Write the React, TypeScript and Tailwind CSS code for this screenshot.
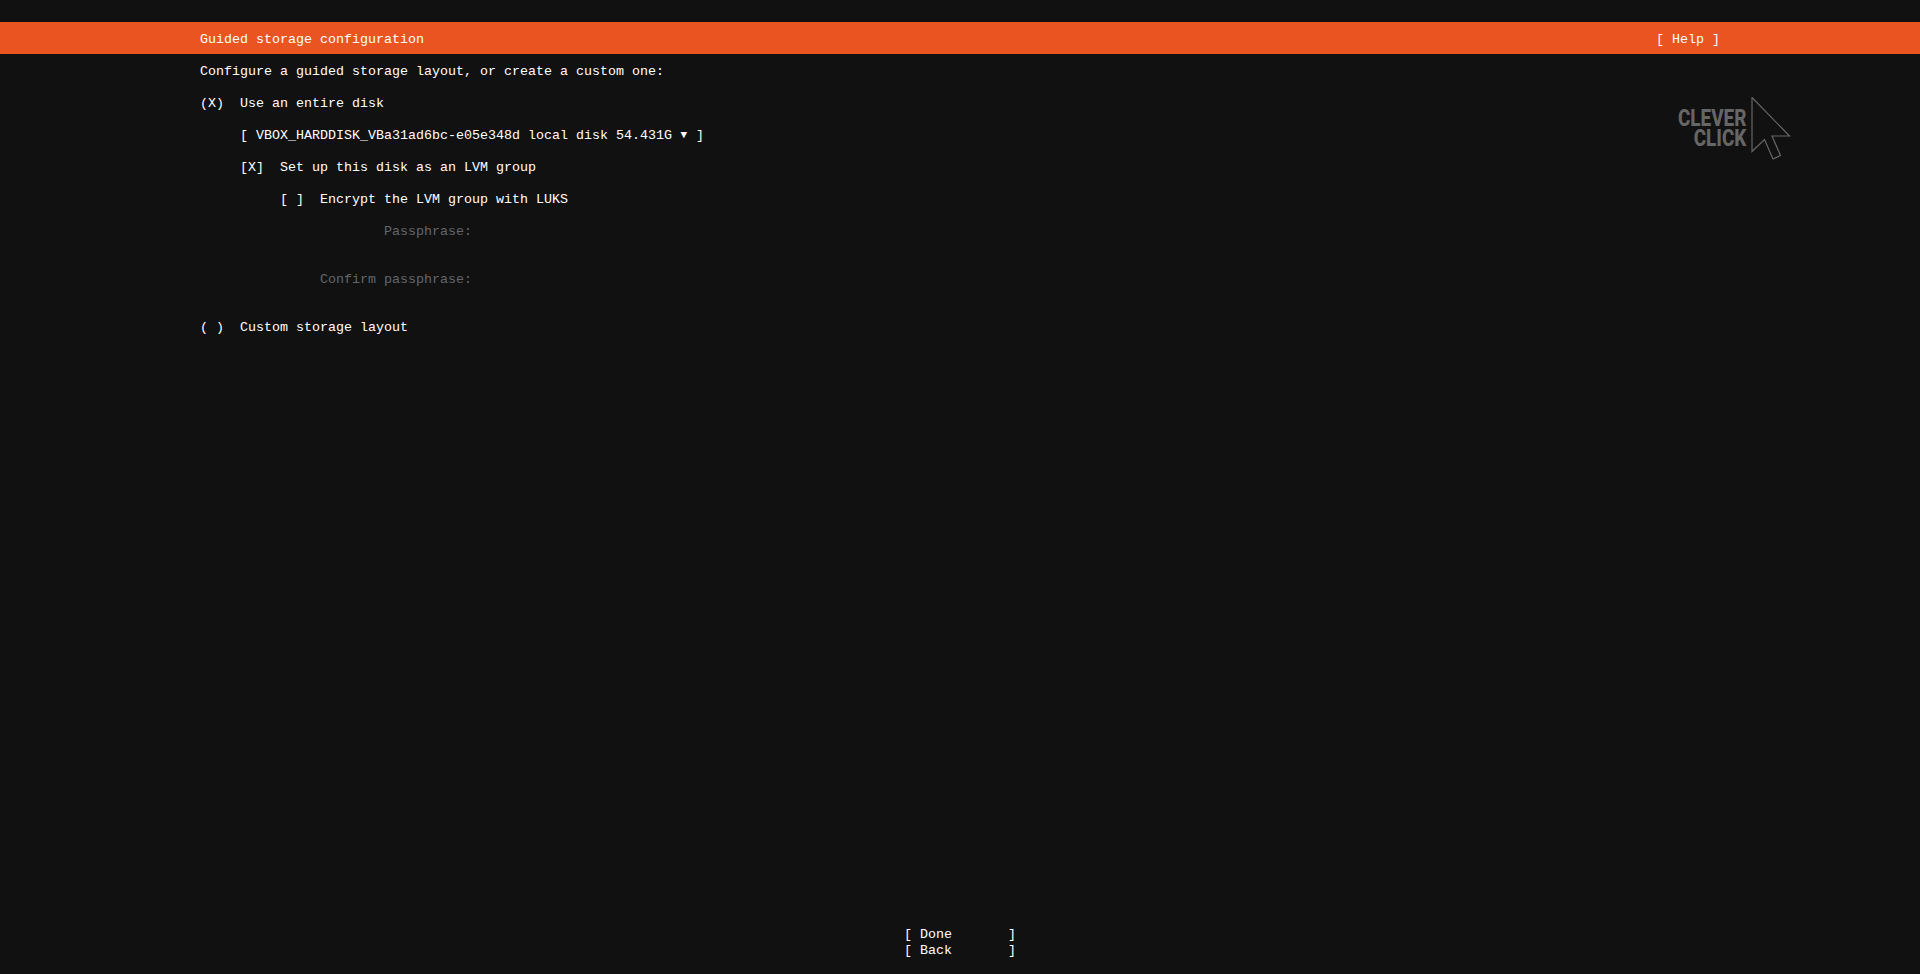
const rows = [
  { text: "Configure a guided storage layout, or create a custom one:", cls: "text-[#ffffff]", gap: "mt-0" },
  { text: "(X)  Use an entire disk", cls: "text-[#ffffff]", gap: "mt-4" },
  { text: "     [ VBOX_HARDDISK_VBa31ad6bc-e05e348d local disk 54.431G ▼ ]", cls: "text-[#ffffff]", gap: "mt-4" },
  { text: "     [X]  Set up this disk as an LVM group", cls: "text-[#ffffff]", gap: "mt-4" },
  { text: "          [ ]  Encrypt the LVM group with LUKS", cls: "text-[#ffffff]", gap: "mt-4" },
  { text: "                       Passphrase:", cls: "text-[#666666]", gap: "mt-4" },
  { text: "               Confirm passphrase:", cls: "text-[#666666]", gap: "mt-8" },
  { text: "( )  Custom storage layout", cls: "text-[#ffffff]", gap: "mt-8" },
];

function RowText({ text }: { text: string }) {
  // the dropdown arrow is smaller than the font's own, but keeps its one cell
  const [before, after] = text.split("▼");
  if (after === undefined) return <>{text}</>;
  return (
    <>
      {before}
      <span className="inline-block w-2 text-center text-[11px] leading-3 align-[1px]">▼</span>
      {after}
    </>
  );
}

function Logo() {
  return (
    <div className="absolute left-[1676px] top-[97px] w-[116px] h-[64px]">
      <div className="absolute right-[46px] top-[12px] text-right font-['Roboto',sans-serif] font-extrabold text-[#666666] text-[23px] leading-[20px] origin-right scale-x-[0.82]">
        <div>CLEVER</div>
        <div>CLICK</div>
      </div>
      <svg className="absolute left-0 top-0" width="116" height="64" viewBox="0 0 116 64" fill="none">
        <path
          d="M76 0.5L113.5 39H96L104.5 58.5L97 62L88.5 42.5L76 54.5Z"
          stroke="#666666"
          strokeWidth="1.2"
        />
      </svg>
    </div>
  );
}

export default function App() {
  return (
    <div className="relative flex flex-col min-h-[974px] bg-[#111111] font-['Liberation_Mono',monospace] text-[13.33px] leading-4 whitespace-pre">
      <div className="flex justify-between items-start h-8 mt-[22px] pt-[10px] pl-[200px] pr-[200px] bg-[#e95420] text-white">
        <span>Guided storage configuration</span>
        <span>[ Help ]</span>
      </div>
      <div className="flex flex-col pl-[200px] pt-[10px]">
        {rows.map((row) => (
          <div key={row.text} className={`${row.gap} ${row.cls}`}>
            <RowText text={row.text} />
          </div>
        ))}
      </div>
      <Logo />
      <div className="flex flex-col mt-auto mb-[15px] pl-[904px] text-white">
        <div>[ Done       ]</div>
        <div>[ Back       ]</div>
      </div>
    </div>
  );
}
